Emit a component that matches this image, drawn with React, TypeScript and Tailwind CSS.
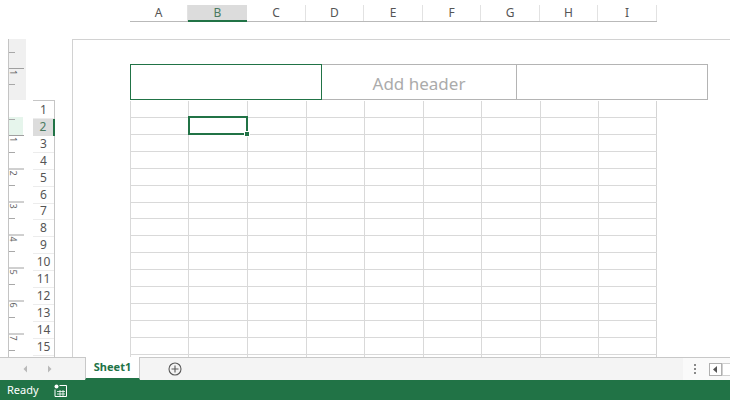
const cols = ["A", "B", "C", "D", "E", "F", "G", "H", "I"];
const widths = [58, 59, 59, 58, 59, 58, 59, 58, 59];
const rows = Array.from({ length: 15 }, (_, i) => i + 1);
const gridRows = Array.from({ length: 16 }, (_, i) => i + 1);
const majors = [[68, 1], [135, 1], [168.5, 2], [201.5, 3], [234.5, 4], [267.5, 5], [300.5, 6], [333.5, 7]];
const minors = [52, 84, 119, 152, 185, 218, 251, 284, 317, 350];

function Ruler() {
  return (
    <svg width="18" height="318" viewBox="0 39 18 318" className="block shrink-0">
      <rect x="0" y="39" width="18" height="61" fill="#f0f0f0" />
      <rect x="0" y="117" width="15" height="18" fill="#e6f5ec" />
      <line x1="0.5" y1="39" x2="0.5" y2="357" stroke="#c4c4c4" />
      {minors.map((y) => (
        <line key={y} x1="1" x2="7" y1={y + 0.5} y2={y + 0.5} stroke="#a8a8a8" />
      ))}
      {majors.map(([y, n]) => (
        <g key={y}>
          <line x1="1" x2="16" y1={y + 0.5} y2={y + 0.5} stroke="#a0a0a0" />
          <text
            x="0"
            y="0"
            transform={`translate(2 ${y + 2}) rotate(90)`}
            fontSize="9"
            fill="#666"
            fontFamily="Noto Sans, sans-serif"
          >
            {n}
          </text>
        </g>
      ))}
    </svg>
  );
}

export default function App() {
  return (
    <div className="flex h-[400px] w-[730px] flex-col overflow-hidden bg-white font-['Noto_Sans',sans-serif]">
      <div className="flex h-[357px] flex-col overflow-hidden">
        <div className="flex h-[39px] shrink-0 items-start pl-[130px] pt-[5px]">
          <div className="flex h-[17px] border-b border-[#b9b9b9]">
            {cols.map((c, i) => (
              <div
                key={c}
                style={{ width: widths[i] }}
                className={
                  c === "B"
                    ? "-mb-px flex items-center justify-center border-b-2 border-[#217346] bg-[#dcdcdc] text-[12px] leading-none text-[#4a7a60]"
                    : "flex items-center justify-center border-r border-[#e2e2e2] text-[12px] leading-none text-[#555]"
                }
              >
                {c}
              </div>
            ))}
          </div>
        </div>
        <div className="flex min-h-0 flex-1">
          <div className="ml-2 flex">
            <Ruler />
          </div>
          <div className="ml-[7px] mt-[61px] flex w-[22px] shrink-0 flex-col border-t border-r border-[#c6c6c6] pt-px">
            {rows.map((r) => (
              <div
                key={r}
                className={
                  r === 2
                    ? "-mr-px flex h-[16.93px] shrink-0 items-center justify-center border-r-2 border-[#217346] bg-[#dcdcdc] text-[12px] leading-none text-[#4a7a60]"
                    : "flex h-[16.93px] shrink-0 items-center justify-center border-b border-[#ececec] text-[12px] leading-none text-[#555]"
                }
              >
                {r}
              </div>
            ))}
          </div>
          <div className="ml-[17px] flex-1 border-t border-l border-[#d2d2d2] pl-[57px] pt-[24px]">
            <div className="flex h-[37px] w-[578px] items-start text-[17px] text-[#ababab]">
              <div className="h-[36px] w-[192px] border border-[#217346]" />
              <div className="flex h-[36px] w-[194px] items-center justify-center border-y border-[#b4b4b4] pt-[4px]">
                Add header
              </div>
              <div className="h-[36px] w-[192px] border border-[#b4b4b4]" />
            </div>
            <div className="grid w-[527px] grid-cols-[58px_59px_59px_58px_59px_58px_59px_58px_59px] border-r border-[#d4d4d4]">
              {gridRows.flatMap((r) =>
                cols.map((c) => (
                  <div key={`${c}${r}`} className="relative h-[16.93px] border-b border-l border-[#d9d9d9]">
                    {c === "B" && r === 2 && (
                      <div className="absolute -left-px -top-[2px] z-10 h-[19px] w-[60px] border-2 border-[#217346]">
                        <div className="absolute -bottom-[4px] -right-[4px] h-[6px] w-[6px] border border-white bg-[#217346]" />
                      </div>
                    )}
                  </div>
                ))
              )}
            </div>
          </div>
        </div>
      </div>
      <div className="flex h-[23px] shrink-0 items-stretch border-t border-[#c8c8c8] bg-[#f4f4f4]">
        <div className="flex w-[85px] items-center pl-[23px] text-[#b4b4b4]">
          <svg width="30" height="8" viewBox="0 0 30 8">
            <path d="M4 0.5 0.5 4 4 7.5Z" fill="#b9b9b9" />
            <path d="M25 0.5 28.5 4 25 7.5Z" fill="#b9b9b9" />
          </svg>
        </div>
        <div className="-mt-px flex w-[55px] items-center justify-center border-x border-b-2 border-x-[#c8c8c8] border-b-[#217346] bg-white text-[11px] font-bold text-[#217346]">
          Sheet1
        </div>
        <div className="ml-[28px] flex items-center">
          <svg width="14" height="14" viewBox="0 0 14 14" fill="none" stroke="#5a5a5a" strokeWidth="1.1">
            <circle cx="7" cy="7" r="6" />
            <path d="M7 3.5v7M3.5 7h7" />
          </svg>
        </div>
        <div className="ml-auto flex w-[47px] items-center gap-[13px] self-stretch bg-[#fafafa] pl-[11px]">
          <div className="flex flex-col gap-[2px]">
            <div className="h-[2px] w-[2px] bg-[#8a8a8a]" />
            <div className="h-[2px] w-[2px] bg-[#8a8a8a]" />
            <div className="h-[2px] w-[2px] bg-[#8a8a8a]" />
          </div>
          <div className="flex h-[13px] w-[13px] shrink-0 items-center justify-center border border-[#b0b0b0] bg-white">
            <svg width="5" height="7" viewBox="0 0 5 7">
              <path d="M4 0 0 3.5 4 7Z" fill="#555" />
            </svg>
          </div>
          <div className="-ml-[13px] h-[13px] w-[10px] shrink-0 border-y border-l border-[#d0d0d0] bg-white" />
        </div>
      </div>
      <div className="flex h-[20px] shrink-0 items-center bg-[#217346] pl-[7px] text-[11px] text-white">
        <span>Ready</span>
        <svg className="ml-[15px]" width="13" height="13" viewBox="0 0 13 13" fill="none" stroke="#fff">
          <circle cx="2.5" cy="2.5" r="2" fill="#fff" stroke="none" />
          <path d="M5.5 1.5h7v11h-11.500v-7" />
          <path d="M3 7.500h8M3 10h8M6 6v6M9 6v6" strokeWidth="0.8" />
        </svg>
      </div>
    </div>
  );
}
